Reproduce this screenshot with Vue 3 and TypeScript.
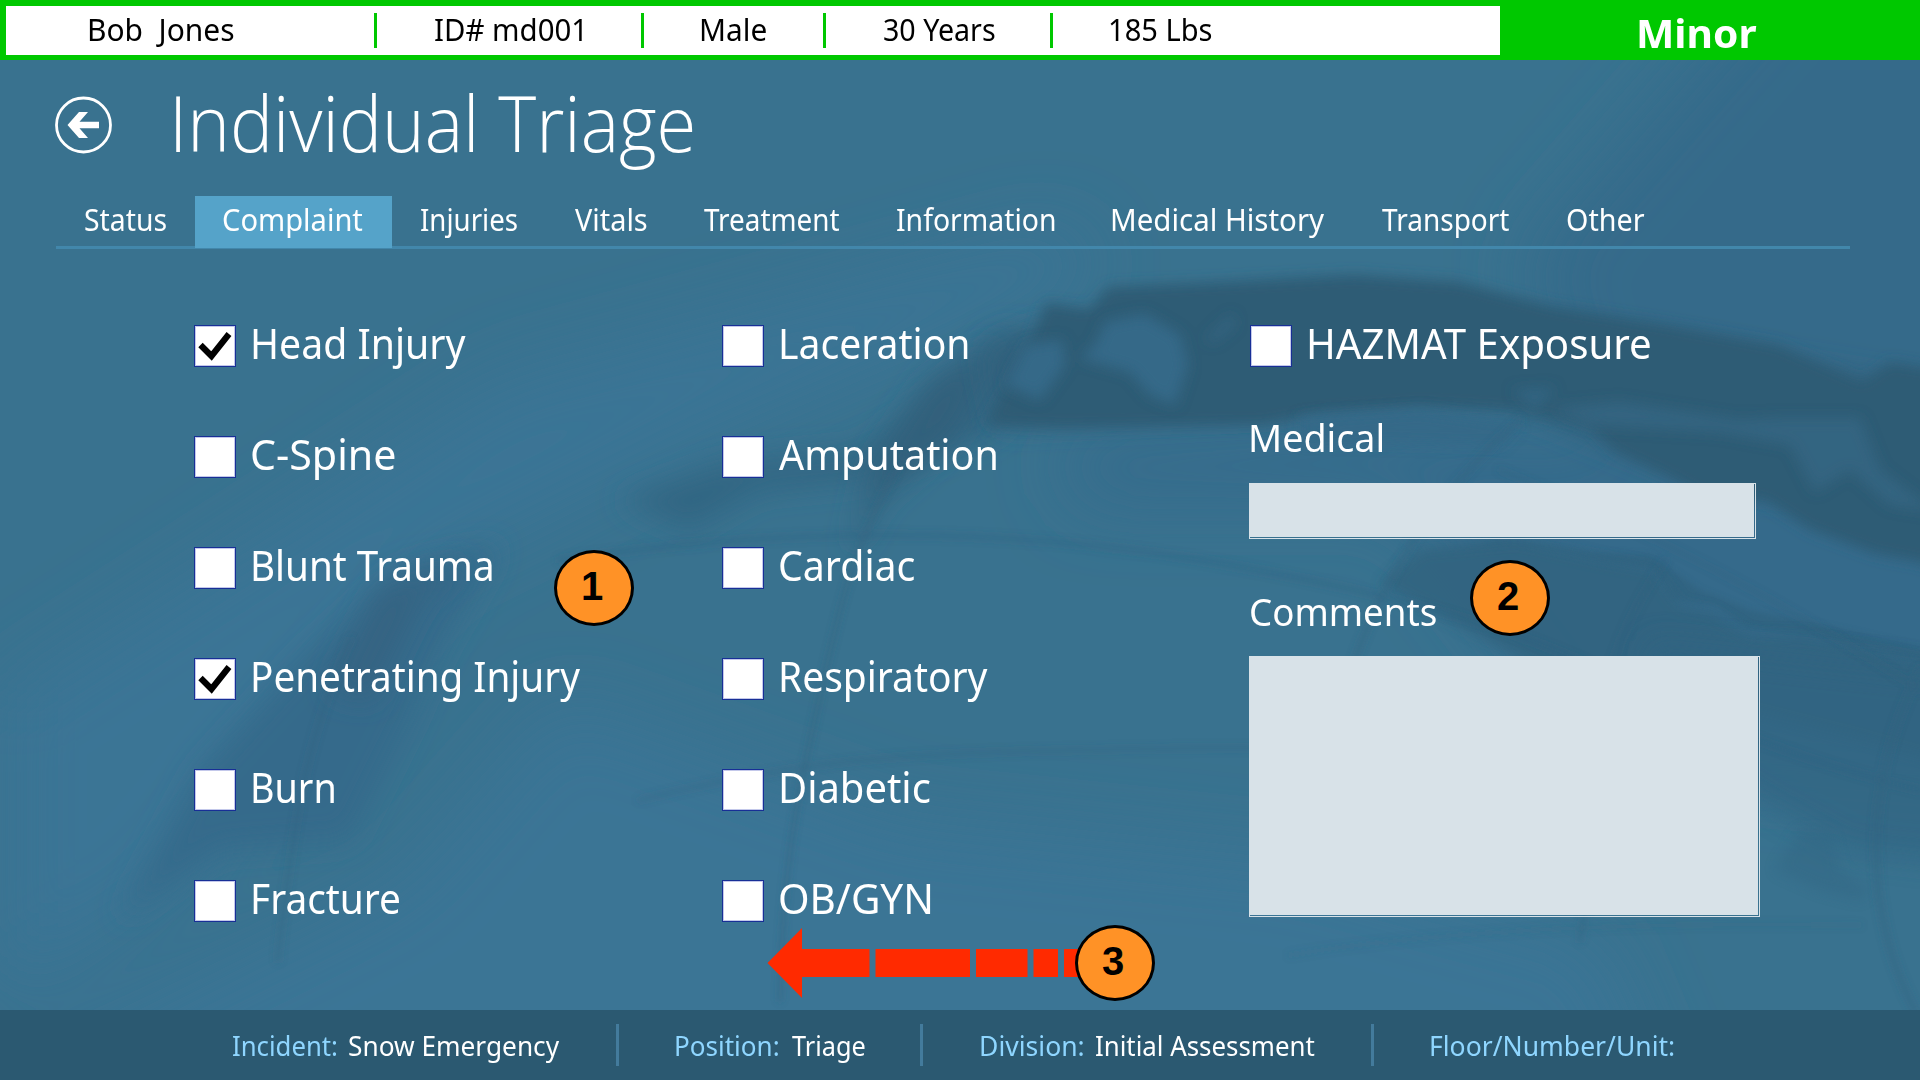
<script setup lang="ts">
import type { Directive } from 'vue'

interface Label {
  text: string
  width: number
}
interface PatientField extends Label {
  cell: number
}
interface Complaint extends Label {
  checked?: boolean
  indent: number
}
interface FooterField {
  label: Label
  value?: Label
}

/* Stretches a text so that its ink is exactly the given number of pixels wide. */
const vFit: Directive<HTMLElement, number> = {
  mounted(el, { value }) {
    const ctx = document.createElement('canvas').getContext('2d')
    if (!ctx) return
    const cs = getComputedStyle(el)
    const zoom = 10
    ctx.font = `${cs.fontWeight} ${parseFloat(cs.fontSize) * zoom}px ${cs.fontFamily}`
    const m = ctx.measureText(el.textContent ?? '')
    const inkLeft = -m.actualBoundingBoxLeft / zoom
    const scale = value / (m.actualBoundingBoxRight / zoom - inkLeft)
    const natural = el.getBoundingClientRect().width
    el.style.transform = `scaleX(${scale})`
    el.style.marginLeft = `${-inkLeft * scale}px`
    el.style.marginRight = `${value - natural + inkLeft * scale}px`
  },
}

const patient: PatientField[] = [
  { text: 'Bob  Jones', width: 143.5, cell: 284 },
  { text: 'ID# md001', width: 147, cell: 267 },
  { text: 'Male', width: 64, cell: 182 },
  { text: '30 Years', width: 110.5, cell: 227 },
  { text: '185 Lbs', width: 101, cell: 300 },
]

const tabs: Label[] = [
  { text: 'Status', width: 80.5 },
  { text: 'Complaint', width: 139 },
  { text: 'Injuries', width: 96 },
  { text: 'Vitals', width: 71.5 },
  { text: 'Treatment', width: 135 },
  { text: 'Information', width: 157.5 },
  { text: 'Medical History', width: 211.5 },
  { text: 'Transport', width: 127 },
  { text: 'Other', width: 77 },
]
const activeTab = 'Complaint'

const injuries: Complaint[] = [
  { text: 'Head Injury', width: 212, indent: 17.5, checked: true },
  { text: 'C-Spine', width: 142.5, indent: 16 },
  { text: 'Blunt Trauma', width: 238, indent: 17.5 },
  { text: 'Penetrating Injury', width: 326.5, indent: 17.5, checked: true },
  { text: 'Burn', width: 80.5, indent: 17.5 },
  { text: 'Fracture', width: 145.5, indent: 17.5 },
]
const conditions: Complaint[] = [
  { text: 'Laceration', width: 186, indent: 17.5 },
  { text: 'Amputation', width: 217, indent: 14.5 },
  { text: 'Cardiac', width: 134.5, indent: 15.5 },
  { text: 'Respiratory', width: 206, indent: 17.5 },
  { text: 'Diabetic', width: 148, indent: 17.5 },
  { text: 'OB/GYN', width: 150.5, indent: 15.5 },
]
const hazmat: Complaint[] = [{ text: 'HAZMAT Exposure', width: 340, indent: 17.5 }]
const columns = [injuries, conditions, hazmat]

const footer: FooterField[] = [
  { label: { text: 'Incident:', width: 103.5 }, value: { text: 'Snow Emergency', width: 210 } },
  { label: { text: 'Position:', width: 101.5 }, value: { text: 'Triage', width: 72.5 } },
  { label: { text: 'Division:', width: 101.5 }, value: { text: 'Initial Assessment', width: 218.5 } },
  { label: { text: 'Floor/Number/Unit:', width: 242 } },
]
</script>

<template>
  <div class="screen">
    <svg class="backdrop" viewBox="0 0 1920 1080" aria-hidden="true">
      <defs>
        <filter id="b40" x="-40%" y="-40%" width="180%" height="180%"><feGaussianBlur stdDeviation="36" /></filter>
        <filter id="b12" x="-30%" y="-30%" width="160%" height="160%"><feGaussianBlur stdDeviation="14" /></filter>
        <filter id="b6" x="-20%" y="-20%" width="140%" height="140%"><feGaussianBlur stdDeviation="6.500" /></filter>
        <filter id="b3" x="-20%" y="-20%" width="140%" height="140%"><feGaussianBlur stdDeviation="3" /></filter>
      </defs>
      <rect width="1920" height="1080" fill="#39728f" />
      <g filter="url(#b40)">
        <path d="M0 700L500 380L1060 230L1100 270L700 440L440 570L160 900L0 1000z" fill="#3b7495" />
        <path d="M-200 1180L400 880L560 700L900 820L1300 860L1600 940L1700 1180z" fill="#3b7495" />
        <path d="M1800 -60H2200V700L1640 560L1520 260z" fill="#356a8a" />
        <path d="M1060 440L1500 420L2100 560V800L1600 760L1400 500L1080 500z" fill="#366b8b" />
      </g>
      <g filter="url(#b12)">
        <path d="M500 545L400 570L300 660L200 770L120 920L220 850L350 840L410 720L440 650z" fill="#366b8b" />
        <path d="M620 500L720 465L860 450L940 390L1000 330L1050 340L1000 430L860 480L760 490L690 530z" fill="#336683" />
      </g>
      <path d="M470 560L420 600L370 700L330 690L380 590z" fill="#346482" filter="url(#b12)" />
      <path d="M930 380L1000 345L960 430L880 500L850 560L870 470z" fill="#30607b" filter="url(#b12)" />
      <path d="M985 350L1035 330L1300 300L1700 350L2000 400V520L1700 480L1500 400L1000 425z" fill="#30607b" filter="url(#b12)" />
      <path d="M1030 345L1046 303L1089 310L1108 287L1225 282L1355 275L1459 282L1550 306L1668 325L1778 345L1863 382L1890 362L2000 380V590L1920 562L1876 554L1811 530L1765 500L1710 500L1668 476L1615 451L1590 425L1518 410L1420 405L1323 412L1264 424L1063 427L985 424L1005 390z" fill="#2d5b74" filter="url(#b6)" />
      <g filter="url(#b6)" fill="#356988">
        <path d="M1095 345L1105 322L1145 314L1180 335L1188 365L1175 405L1150 395L1130 372L1080 358z" />
        <path d="M1005 385L1025 345L1062 340L1065 365L1040 400z" />
        <path d="M1205 340L1232 314L1235 325L1214 342z" opacity=".6" />
        <path d="M1512 390L1555 388L1536 410z" opacity=".7" />
        <path d="M1300 418L1420 411L1520 424L1500 445L1300 440z" />
        <path d="M1550 408L1620 402L1740 420L1778 418L1860 418L1880 470L1935 512L1890 505L1850 470L1815 492L1790 445L1720 432L1590 425z" opacity=".6" />
      </g>
      <g filter="url(#b3)" fill="#2f5f79" opacity=".5">
        <path d="M1430 560Q1510 535 1600 562L1655 570L1670 600L1715 605L1745 628L1811 636L2000 682V665L1820 625L1750 610L1700 590L1650 555L1590 552L1500 540z" />
      </g>
      <path d="M1381 585L1420 549L1518 540L1602 559L1654 569L1680 605L1713 612L1750 635L1811 636L2000 680V780L1860 740L1700 700L1560 680L1450 620z" fill="#32637f" opacity=".85" filter="url(#b6)" />
      <path d="M1650 640L2100 690V880L1850 850L1760 800L1640 720z" fill="#336582" opacity=".7" filter="url(#b12)" />
      <path d="M1775 870L1800 830L1830 830L1840 870L1870 890L1860 900L1820 890z" fill="#336582" opacity=".4" filter="url(#b6)" />
      <g fill="none" stroke="#31617d" filter="url(#b3)" stroke-linecap="round">
        <path d="M905 455Q860 530 840 610T800 790Q782 880 780 1000" stroke-width="5" opacity=".4" />
        <path d="M560 560Q900 510 1200 560T1640 690Q1790 760 1920 790" stroke-width="7" opacity=".28" />
        <path d="M640 800Q780 765 900 757T1260 748Q1440 750 1600 790" stroke-width="6" opacity=".22" />
        <path d="M1520 420Q1430 500 1385 590T1345 720Q1342 800 1342 880" stroke-width="7" opacity=".35" />
        <path d="M1665 560Q1610 640 1600 720Q1600 830 1580 940" stroke-width="7" opacity=".25" />
        <path d="M1920 670Q1875 760 1876 850T1915 1010" stroke-width="8" opacity=".35" />
        <path d="M350 640Q310 730 295 830T278 960" stroke-width="7" opacity=".2" />
        <path d="M1500 470Q1720 560 1920 690" stroke-width="6" opacity=".2" />
        <path d="M1290 955Q1500 920 1860 925" stroke-width="6" opacity=".12" />
      </g>
    </svg>

    <header class="patient">
      <div class="patient-bar">
        <div v-for="p in patient" :key="p.text" class="patient-field" :style="{ width: p.cell + 'px' }">
          <span v-fit="p.width" class="fit">{{ p.text }}</span>
        </div>
      </div>
      <div class="severity"><span v-fit="117" class="fit">Minor</span></div>
    </header>

    <main class="content">
      <div class="heading">
        <svg class="back" viewBox="0 0 58 58" role="img" aria-label="Back">
          <circle cx="28.500" cy="29" r="27" fill="none" stroke="#fff" stroke-width="2.8" />
          <path d="M12.500 29L24 16H33L24.500 25.800H44V32.200H24.500L33 42H24z" fill="#fff" />
        </svg>
        <h1><span v-fit="517" class="fit">Individual Triage</span></h1>
      </div>

      <nav class="tabs">
        <a v-for="t in tabs" :key="t.text" class="tab" :class="{ active: t.text === activeTab }">
          <span v-fit="t.width" class="fit">{{ t.text }}</span>
        </a>
      </nav>

      <div class="columns">
        <section v-for="(column, i) in columns" :key="i" class="column">
          <label v-for="c in column" :key="c.text" class="option">
            <span class="box">
              <svg v-if="c.checked" viewBox="0 0 40 40">
                <path d="M5.500 19L16.500 30L34 8" fill="none" stroke="#000" stroke-width="6.2" />
              </svg>
            </span>
            <span class="option-text" :style="{ paddingLeft: c.indent + 'px' }">
              <span v-fit="c.width" class="fit">{{ c.text }}</span>
            </span>
          </label>
          <template v-if="i === 2">
            <div class="field-label medical"><span v-fit="131" class="fit">Medical</span></div>
            <div class="field field-medical"><div class="fill"></div></div>
            <div class="field-label comments"><span v-fit="185" class="fit">Comments</span></div>
            <div class="field field-comments"><div class="fill"></div></div>
          </template>
        </section>
      </div>
    </main>

    <footer class="footer">
      <div v-for="f in footer" :key="f.label.text" class="footer-field">
        <span v-fit="f.label.width" class="fit key">{{ f.label.text }}</span>
        <span v-if="f.value" v-fit="f.value.width" class="fit">{{ f.value.text }}</span>
      </div>
    </footer>

    <svg class="arrow" viewBox="0 0 320 70" aria-hidden="true">
      <path d="M.5 35L35 0V21H102.500V49H35V70z" fill="#ff2a00" />
      <path d="M108.500 21H203V49H108.500zM209 21H260.500V49H209zM266.500 21H291V49H266.500zM297 21H320V49H297z" fill="#ff2a00" />
    </svg>
    <div class="badge badge-1">1</div>
    <div class="badge badge-2">2</div>
    <div class="badge badge-3">3</div>
  </div>
</template>

<style>
body {
  margin: 0;
  overflow: hidden;
}
</style>

<style scoped>
.screen {
  position: relative;
  display: flex;
  flex-direction: column;
  width: 1920px;
  height: 1080px;
  overflow: hidden;
  color: #fff;
  font-family: 'Noto Sans', 'Open Sans', sans-serif;
}
.backdrop {
  position: absolute;
  inset: 0;
  width: 1920px;
  height: 1080px;
}
.fit {
  display: inline-block;
  flex: none;
  white-space: pre;
  transform-origin: 0 50%;
}
.patient {
  position: relative;
  display: flex;
  height: 60px;
  box-sizing: border-box;
  padding: 6px 0 5px 6px;
  background: #00c800;
}
.patient-bar {
  display: flex;
  align-items: center;
  width: 1494px;
  padding-left: 84px;
  box-sizing: border-box;
  background: #fff;
  color: #000;
  font-size: 30px;
}
.patient-field {
  flex: none;
  box-sizing: border-box;
  height: 35px;
  line-height: 33px;
}
.patient-field + .patient-field {
  padding-left: 57.500px;
  border-left: 3px solid #00c800;
}
.severity {
  display: flex;
  align-items: center;
  padding: 4px 0 0 139px;
  line-height: 44px;
  font-size: 39px;
  font-weight: 700;
}
.content {
  position: relative;
  height: 950px;
}
.heading {
  display: flex;
  height: 136px;
  padding-left: 55px;
}
.back {
  width: 58px;
  height: 58px;
  margin-top: 36px;
}
h1 {
  margin: 0 0 0 62.500px;
  font-family: 'Open Sans', 'Noto Sans', sans-serif;
  font-size: 77px;
  line-height: 126px;
  font-weight: 300;
}
.tabs {
  display: flex;
  width: 1794px;
  height: 53px;
  box-sizing: border-box;
  margin-left: 56px;
  border-bottom: 3px solid #4287ab;
}
.tab {
  height: 52px;
  padding: 0 29px;
  line-height: 48px;
  font-size: 30px;
}
.tab.active {
  background: #55a3c9;
}
.columns {
  display: flex;
  padding: 76px 0 0 194px;
}
.column {
  width: 528px;
}
.option {
  display: flex;
  height: 42px;
  margin-bottom: 69px;
}
.box {
  width: 42px;
  height: 42px;
  flex: none;
  box-sizing: border-box;
  border: 1px solid #182f96;
  background: #fff;
  box-shadow: inset 0 0 0 1px #c3c8ea;
}
.box svg {
  display: block;
}
.option-text {
  font-size: 42px;
  line-height: 36px;
}
.field-label {
  padding-left: 1px;
  font-size: 39px;
  line-height: 50px;
}
.medical {
  margin-top: -24px;
  padding-left: 2px;
}
.comments {
  margin-top: 47px;
}
.field {
  width: 507px;
  box-sizing: border-box;
  margin-left: -1px;
  border: 1px solid #d8e2e8;
  padding: 0 1px 1px 0;
}
.fill {
  height: 100%;
  background: #d8e2e8;
}
.field-medical {
  height: 56px;
  margin-top: 21px;
}
.field-comments {
  width: 511px;
  height: 261px;
  margin-top: 20px;
}
.footer {
  position: relative;
  display: flex;
  align-items: center;
  height: 70px;
  padding-left: 232.500px;
  background: #2b5971;
  font-size: 27.500px;
}
.footer-field {
  display: flex;
  gap: 13.500px;
  height: 42px;
  line-height: 43px;
  padding-right: 56px;
}
.footer-field + .footer-field {
  padding-left: 58px;
  border-left: 3px solid #437b9c;
}
.key {
  color: #8fd6ff;
}
.arrow {
  position: absolute;
  left: 767px;
  top: 928px;
  width: 320px;
  height: 70px;
}
.badge {
  position: absolute;
  width: 80px;
  height: 76px;
  box-sizing: border-box;
  padding-right: 4px;
  border: 3px solid #000;
  border-radius: 50%;
  background: #ff9226;
  color: #000;
  font: 700 40px/67px 'Liberation Sans', Arial, sans-serif;
  text-align: center;
}
.badge-1 {
  left: 554px;
  top: 550px;
}
.badge-2 {
  left: 1470px;
  top: 560px;
}
.badge-3 {
  left: 1075px;
  top: 925px;
}
</style>
